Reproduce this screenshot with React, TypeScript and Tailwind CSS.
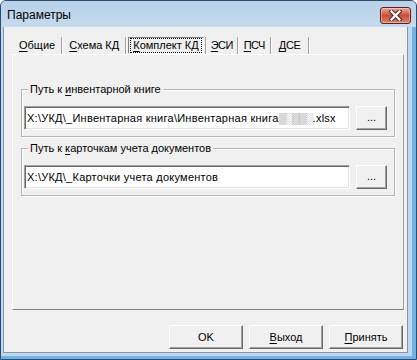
import React from "react";

const font = "font-['Liberation_Sans',Arial,sans-serif]";

function Key({ children }: { children: React.ReactNode }) {
  return <span className="underline decoration-1 underline-offset-[2px]">{children}</span>;
}

const tabs = [
  { k: "О", rest: "бщие", pad: "px-[2px]" },
  { k: "С", rest: "хема КД", pad: "px-[2px]" },
  { k: "К", rest: "омплект КД", pad: "px-[2px]", active: true },
  { k: "Э", rest: "СИ", pad: "px-0 tracking-[-0.6px]" },
  { k: "П", rest: "СЧ", pad: "px-[1px] tracking-[-0.6px]" },
  { k: "Д", rest: "СЕ", pad: "px-[3px] tracking-[-0.3px]" },
];

// classic raised 3D button
function Button({ className, children }: { className?: string; children: React.ReactNode }) {
  return (
    <div
      className={`flex items-center justify-center border border-t-white border-l-white border-r-[#696969] border-b-[#696969] bg-[#f0f0f0] shadow-[inset_-1px_-1px_0_#a0a0a0] ${className ?? ""}`}
    >
      {children}
    </div>
  );
}

function PathGroup({ label, children }: { label: React.ReactNode; children: React.ReactNode }) {
  return (
    <div className="relative flex gap-[6px] border border-[#b5b5b5] pt-[16px] pb-[6px] pl-[2px] pr-[7px] shadow-[inset_1px_1px_0_#fff,1px_1px_0_#fff]">
      <span className="absolute left-[6px] top-[-7px] bg-[#f0f0f0] px-[2px] leading-[13px]">{label}</span>
      {/* sunken edit box */}
      <div className="flex h-[24px] flex-1 items-center overflow-hidden whitespace-nowrap border border-t-[#a0a0a0] border-l-[#a0a0a0] border-r-white border-b-white bg-white pl-[2px] tracking-[0.25px] shadow-[inset_1px_1px_0_#696969,inset_-1px_-1px_0_#e3e3e3]">
        {children}
      </div>
      <Button className="h-[24px] w-[31px] pb-[2px]">...</Button>
    </div>
  );
}

export default function App() {
  return (
    <div className={`${font} text-[11px] text-black`}>
      <div className="flex h-[360px] w-[417px] flex-col overflow-hidden rounded-t-[6px] border border-[#2e4a6b] bg-[#c2d7ed] shadow-[inset_-4px_-3px_0_#6fb4e2]">
        {/* Title bar */}
        <div className="flex h-[26px] shrink-0 items-start justify-between bg-gradient-to-b from-[#b9d0e9] to-[#c6daee] pl-[6px] pr-[5px]">
          <span className="mt-[6px] text-[12px] leading-[16px]">Параметры</span>
          <div className="mt-[6px] flex h-[17px] w-[31px] items-center justify-center rounded-[3px] border border-[#5a2219] bg-gradient-to-b from-[#e7a597] via-[#c94d38] to-[#d9826f] shadow-[inset_0_0_0_1px_rgba(255,255,255,0.35)]">
            <svg width="13" height="11" viewBox="0 0 13 11">
              <path d="M2.5 1.5 L10.5 9.5 M10.5 1.5 L2.5 9.5" stroke="#4a1b14" strokeWidth="4.2" strokeLinecap="square" />
              <path d="M2.5 1.5 L10.5 9.5 M10.5 1.5 L2.5 9.5" stroke="#fff" strokeWidth="2.4" strokeLinecap="square" />
            </svg>
          </div>
        </div>

        {/* Client area */}
        <div className="mb-[6px] ml-[2px] mr-[8px] flex flex-1 flex-col border border-t-0 border-[#7f96b0] bg-[#f0f0f0] pl-[8px] pr-[3px] pt-[10px] pb-[3px]">
          {/* Tabs (flat buttons) */}
          <div className="flex h-[17px] items-stretch pl-[2px]">
            {tabs.map((t) => (
              <div key={t.k + t.rest} className="flex items-stretch">
                <div
                  className={`flex items-center border px-[1px] ${
                    t.active
                      ? "border-t-[#808080] border-l-[#808080] border-r-white border-b-white"
                      : "border-transparent"
                  }`}
                >
                  <span
                    className={`border border-dotted leading-[13px] ${t.pad} ${
                      t.active ? "border-black" : "border-transparent"
                    }`}
                  >
                    <Key>{t.k}</Key>
                    {t.rest}
                  </span>
                </div>
                <div className="mx-[1px] w-[2px] border-l border-r border-l-[#a0a0a0] border-r-white" />
              </div>
            ))}
          </div>

          {/* Tab page */}
          <div className="flex h-[256px] flex-col gap-[11px] border border-t-white border-l-white border-r-[#a0a0a0] border-b-[#808080] px-[8px] pt-[34px]">
            <PathGroup
              label={
                <>
                  Путь к <Key>и</Key>нвентарной книге
                </>
              }
            >
              X:\УКД\_Инвентарная книга\Инвентарная книга
              <span className="tracking-[-1px] text-[#6e6e6e]">▒░▒▒░</span>.xlsx
            </PathGroup>
            <PathGroup
              label={
                <>
                  Путь к <Key>к</Key>арточкам учета документов
                </>
              }
            >
              X:\УКД\_Карточки учета документов
            </PathGroup>
          </div>

          {/* Dialog buttons */}
          <div className="mt-[15px] mr-[1px] flex justify-end gap-[6px]">
            <Button className="h-[24px] w-[74px]">OK</Button>
            <Button className="h-[24px] w-[74px]">
              <span>
                <Key>В</Key>ыход
              </span>
            </Button>
            <Button className="h-[24px] w-[74px]">
              <span>
                <Key>П</Key>ринять
              </span>
            </Button>
          </div>
        </div>
      </div>
    </div>
  );
}
